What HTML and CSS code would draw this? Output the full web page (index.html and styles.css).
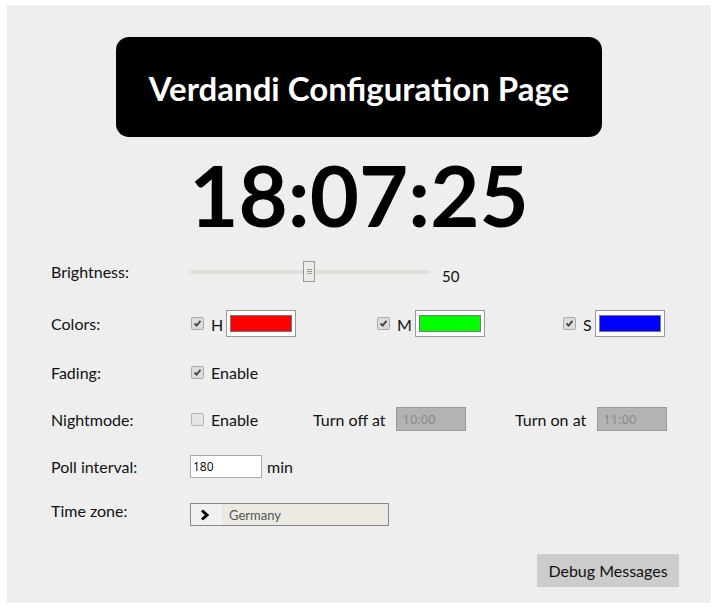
FILE: index.html
```html
<!DOCTYPE html>
<html>
<head>
<meta charset="utf-8">
<link rel="stylesheet" href="styles.css">
</head>
<body>
<main class="page">
  <h1 class="title">Verdandi Configuration Page</h1>
  <div class="clock">18:07:25</div>
  <div class="form">
    <div class="label">Brightness:</div>
    <div class="ctrl">
      <div class="slider"><div class="track"></div><div class="thumb"><i></i><i></i><i></i></div></div>
      <span class="value">50</span>
    </div>

    <div class="label">Colors:</div>
    <div class="ctrl colors">
      <div class="cgroup"><span class="cb on"><svg viewBox="0 0 13 13"><path d="M3 6.5 L5.5 9 L10 3.5" /></svg></span><span class="letter">H</span><span class="color"><span class="swatch red"></span></span></div>
      <div class="cgroup"><span class="cb on"><svg viewBox="0 0 13 13"><path d="M3 6.5 L5.5 9 L10 3.5" /></svg></span><span class="letter">M</span><span class="color"><span class="swatch green"></span></span></div>
      <div class="cgroup"><span class="cb on"><svg viewBox="0 0 13 13"><path d="M3 6.5 L5.5 9 L10 3.5" /></svg></span><span class="letter">S</span><span class="color"><span class="swatch blue"></span></span></div>
    </div>

    <div class="label">Fading:</div>
    <div class="ctrl"><span class="cb on"><svg viewBox="0 0 13 13"><path d="M3 6.5 L5.5 9 L10 3.5" /></svg></span><span class="txt">Enable</span></div>

    <div class="label">Nightmode:</div>
    <div class="ctrl night">
      <div class="ngroup first"><span class="cb"></span><span class="txt">Enable</span></div>
      <div class="ngroup second"><span class="ntext">Turn off at</span><span class="time">10:00</span></div>
      <div class="ngroup"><span class="ntext">Turn on at</span><span class="time">11:00</span></div>
    </div>

    <div class="label">Poll interval:</div>
    <div class="ctrl"><span class="num">180</span><span class="unit">min</span></div>

    <div class="label top">Time zone:</div>
    <div class="ctrl">
      <div class="tz"><span class="tzarrow"><svg viewBox="0 0 10 12"><path d="M2 1.5 L7 6 L2 10.5" /></svg></span><span class="tzname">Germany</span></div>
    </div>
  </div>
  <div class="actions"><button class="debug">Debug Messages</button></div>
</main>
</body>
</html>
```
FILE: styles.css
```css
html, body { background: #fff; }
body {
  margin: 5px 8px 5px 7px;
  font-family: Lato, "Open Sans", sans-serif;
  color: #111;
}
.page {
  background: #eee;
  width: 704px;
  height: 598px;
  box-sizing: border-box;
  padding-top: 32px;
}
.title {
  margin: 0 auto;
  width: 486px;
  height: 100px;
  box-sizing: border-box;
  background: #000;
  color: #fff;
  border-radius: 13px;
  display: flex;
  align-items: center;
  justify-content: center;
  font-size: 33px;
  font-weight: 700;
  padding-top: 1px;
}
.clock {
  height: 111px;
  display: flex;
  align-items: center;
  justify-content: center;
  font-size: 85px;
  font-weight: 700;
  color: #000;
  padding-top: 2px;
  box-sizing: border-box;
}
.form {
  display: grid;
  grid-template-columns: 139px 1fr;
  grid-template-rows: 47px 56px 43px 50px 44px 48px;
  align-items: center;
  padding-left: 44px;
  font-size: 16px;
}
.label.top { align-self: start; padding-top: 13px; }
.ctrl { display: flex; align-items: center; }

.slider { position: relative; width: 240px; height: 22px; }
.track { position: absolute; left: 0; right: 0; top: 9px; height: 4px; background: #e2ded8; }
.thumb {
  position: absolute; left: 113px; top: 0;
  width: 10px; height: 19px;
  border: 1px solid #999; background: #ecebe6;
  display: flex; flex-direction: column; align-items: center; justify-content: center; gap: 1px;
}
.thumb i { display: block; width: 5px; height: 1px; background: #999; }
.value { margin-left: 12px; padding-top: 8px; font-size: 15px; }

.cb {
  width: 11px; height: 11px;
  border: 1px solid #aaa; background: #ddd;
  display: inline-flex; align-items: center; justify-content: center;
  margin-left: 1px;
  border-radius: 2px;
}
.cb:not(.on) { background: #e6e6e6; border-color: #b5b5b5; }
.cb svg { width: 13px; height: 13px; fill: none; stroke: #444; stroke-width: 2.2; }
.letter { margin-left: 7px; margin-top: 3px; }
.cgroup { display: flex; align-items: center; width: 186px; }
.color {
  margin-left: 3px;
  width: 70px; height: 27px; box-sizing: border-box;
  border: 1px solid #999; background: #fff;
  display: flex; align-items: center; justify-content: center;
}
.swatch { width: 60px; height: 15px; border: 1px solid #777; }
.swatch.red { background: #f00; }
.swatch.green { background: #0f0; }
.swatch.blue { background: #00f; }

.txt { margin-left: 7px; }
.night { align-items: center; }
.ngroup { display: flex; align-items: center; }
.ngroup.first { width: 123px; }
.ngroup.second { width: 202px; }
.ntext { margin-right: 11px; }
.time {
  width: 70px; height: 24px; box-sizing: border-box;
  border: 1px solid #999; background: #b3b3b3;
  color: #888; font-size: 13px;
  display: flex; align-items: center; padding-left: 5px;
  font-family: "Open Sans", sans-serif;
}
.num {
  width: 72px; height: 23px; box-sizing: border-box;
  border: 1px solid #aaa; background: #fff;
  font-size: 12px; color: #000;
  display: flex; align-items: center; padding-left: 2px;
  font-family: "Open Sans", sans-serif;
}
.unit { margin-left: 5px; }
.tz {
  width: 199px; height: 23px; box-sizing: border-box;
  border: 1px solid #888; background: #ebe9e2;
  display: flex; align-items: center; margin-top: 5px;
}
.tzarrow { width: 31px; height: 100%; background: #f1f1f1; display: flex; align-items: center; justify-content: center; }
.tzarrow svg { width: 10px; height: 12px; fill: none; stroke: #000; stroke-width: 3; margin-left: -4px; }
.tzname { margin-left: 7px; font-size: 13px; color: #555; }

.actions { display: flex; justify-content: flex-end; padding-right: 32px; margin-top: 18px; }
.debug {
  width: 142px; height: 33px;
  border: none; background: #ccc;
  font-family: Lato, "Open Sans", sans-serif;
  font-size: 16px; color: #111;
}
```
